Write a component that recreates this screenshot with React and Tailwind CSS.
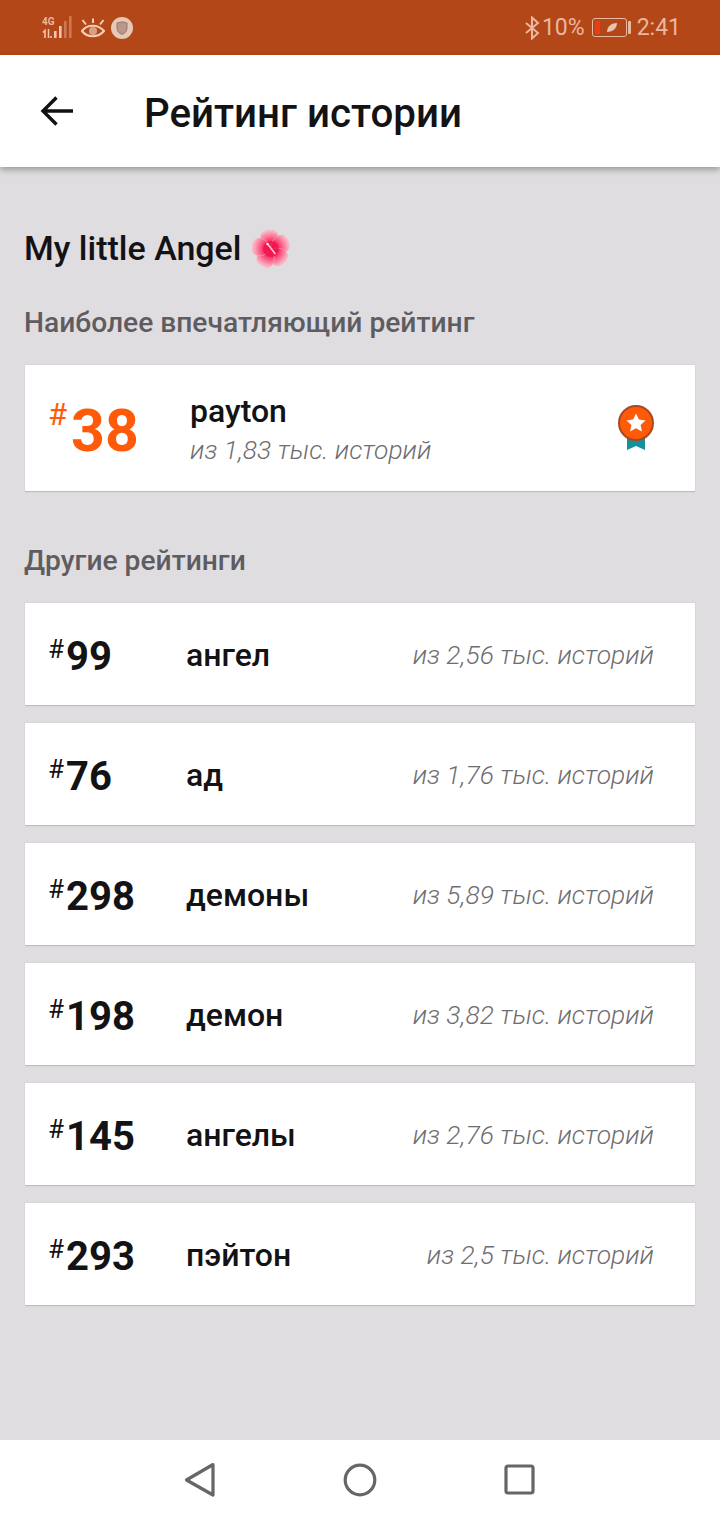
import React from "react";

const rows = [
  ["99", "ангел", "из 2,56 тыс. историй"],
  ["76", "ад", "из 1,76 тыс. историй"],
  ["298", "демоны", "из 5,89 тыс. историй"],
  ["198", "демон", "из 3,82 тыс. историй"],
  ["145", "ангелы", "из 2,76 тыс. историй"],
  ["293", "пэйтон", "из 2,5 тыс. историй"],
];

function Flower() {
  const petals = [-8, 64, 136, 208, 280];
  return (
    <svg width="40" height="40" viewBox="0 0 40 40" className="ml-[10px] shrink-0">
      <defs>
        <radialGradient id="petal" gradientUnits="userSpaceOnUse" cx="20" cy="20" r="19">
          <stop offset="0%" stopColor="#f00a48" />
          <stop offset="45%" stopColor="#fa3c70" />
          <stop offset="80%" stopColor="#fc92ab" />
          <stop offset="100%" stopColor="#fbc4cf" />
        </radialGradient>
      </defs>
      {petals.map((a) => (
        <path
          key={a}
          d="M20 20 C12 16 9 8 13 3.5 C16 0.5 24 0.5 27 3.5 C31 8 28 16 20 20 Z"
          fill="url(#petal)"
          stroke="#f8a9ba"
          strokeWidth="0.6"
          transform={`rotate(${a} 20 20)`}
        />
      ))}
      <circle cx="20" cy="20" r="8" fill="#f20f4c" opacity="0.75" />
      <path d="M17 15.5 L24 24.5" stroke="#fbcfc9" strokeWidth="1.6" strokeLinecap="round" />
      <circle cx="16.5" cy="15" r="1.3" fill="#fde6cf" />
    </svg>
  );
}

function Medal() {
  return (
    <svg width="40" height="48" viewBox="0 0 40 48">
      <path d="M11 28 H29 V46 L20 42 L11 46 Z" fill="#13929c" />
      <circle cx="20" cy="19" r="17" fill="#ff5a0a" stroke="#a9481f" strokeWidth="2" />
      <path d="M20 9.5 L22.9 15.6 L29.5 16.4 L24.6 20.9 L25.9 27.5 L20 24.2 L14.1 27.5 L15.4 20.9 L10.5 16.4 L17.1 15.6 Z" fill="#fff" />
    </svg>
  );
}

function StatusBar() {
  return (
    <div className="h-[55px] shrink-0 bg-[#b34717] flex items-center justify-between pl-[42px] pr-[39px] text-[#eab79f]">
      <div className="flex items-center">
        <svg width="33" height="26" viewBox="0 0 33 26">
          <text x="0" y="9.5" fontSize="10" fontWeight="700" fill="#eab79f" fontFamily="Roboto">4G</text>
          <path d="M1 17.5 L3 15.5 V23 M6.5 14 V23 M9 21 v2" stroke="#f0c4ae" strokeWidth="1.6" fill="none" />
          <rect x="12" y="16" width="2.6" height="7" fill="#f0c4ae" />
          <rect x="17" y="11" width="2.6" height="12" fill="#f0c4ae" />
          <rect x="22" y="6" width="2.6" height="17" fill="#f0c4ae" opacity="0.4" />
          <rect x="27" y="1" width="2.6" height="22" fill="#f0c4ae" opacity="0.4" />
        </svg>
        <svg width="24" height="24" viewBox="0 0 24 24" className="ml-[6px]" fill="none" stroke="#f3cdb8">
          <path d="M1 15 C6 8 17 8 23 15 C17 22 6 22 1 15 Z" strokeWidth="2.2" />
          <circle cx="12" cy="15" r="4" fill="#d9a184" stroke="none" />
          <path d="M1.5 4 L5 8.5 M12 2.5 V7 M22.5 4 L19 8.5" strokeWidth="2" />
        </svg>
        <div className="ml-[6px] w-[22px] h-[22px] rounded-full bg-[#e6c7b8] flex items-center justify-center">
          <svg width="12" height="14" viewBox="0 0 12 14">
            <path d="M1 2 L6 0.8 L11 2 V7.5 C11 10.5 8.5 12.5 6 13.4 C3.5 12.5 1 10.5 1 7.5 Z" fill="#b9978a" stroke="#8e6a5b" strokeWidth="0.8" />
          </svg>
        </div>
      </div>
      <div className="flex items-center font-['Roboto',sans-serif] text-[23px] leading-none">
        <svg width="16" height="24" viewBox="0 0 16 24" fill="none" stroke="#eab79f" strokeWidth="2" className="mr-[2px]">
          <path d="M2 7 L14 17 L8 22.5 V1.5 L14 7 L2 17" />
        </svg>
        <span>10%</span>
        <div className="ml-[7px] w-[35px] h-[19px] rounded-[3px] border border-[#eab79f] flex items-center pl-[2px]">
          <div className="w-[5px] h-[13px] bg-[#f23a13]" />
          <svg width="12" height="11" viewBox="0 0 12 11" className="ml-[6px]">
            <path d="M1 10 C1 4 6 1 11 1 C11 6 7 10 1 10 Z" fill="#e9c3b0" />
          </svg>
        </div>
        <div className="ml-[1px] w-[3px] h-[13px] rounded-[1px] bg-[#eab79f]" />
        <span className="ml-[6px]">2:41</span>
      </div>
    </div>
  );
}

export default function App() {
  return (
    <div className="w-[720px] h-[1520px] flex flex-col bg-[#dfdde0] font-['Roboto',sans-serif] overflow-hidden">
      <StatusBar />
      <header className="relative z-10 h-[112px] shrink-0 bg-white flex items-center pl-[40px] shadow-[0_3px_6px_rgba(0,0,0,0.3)]">
        <svg width="34" height="32" viewBox="0 0 34 32" fill="none" stroke="#111" strokeWidth="3.4">
          <path d="M33 16 H3 M16.5 2.5 L3 16 L16.5 29.5" />
        </svg>
        <h1 className="ml-[70px] mt-[6px] text-[40.3px] leading-none font-medium text-[#131214]">Рейтинг истории</h1>
      </header>
      <main className="flex-1 pl-[25px] pr-[25px] pt-[62px]">
        <div className="flex items-center h-[40px] -ml-px">
          <span className="text-[34px] leading-none font-medium text-[#131214] -mt-[2px]">My little Angel</span>
          <Flower />
        </div>
        <h2 className="mt-[38px] -ml-px text-[28.2px] leading-[32px] font-medium text-[#5e5c60]">Наиболее впечатляющий рейтинг</h2>
        <section className="mt-[26px] h-[127px] bg-white border-b border-[#bdbbbe] shadow-[0_0_1px_rgba(0,0,0,0.2)] flex items-center pl-[23px] pr-[39px]">
          <div className="w-[142px] flex items-start text-[#ff5a0a]">
            <span className="text-[31px] leading-none mt-[2px]">#</span>
            <span className="text-[59px] leading-none font-bold ml-[4px] mt-[4px]">38</span>
          </div>
          <div className="flex-1 pt-[2px]">
            <div className="text-[32px] leading-[36px] font-medium text-[#131214]">payton</div>
            <div className="text-[26.4px] leading-[32px] italic font-light text-[#6f6d71] mt-[5px]">из 1,83 тыс. историй</div>
          </div>
          <Medal />
        </section>
        <h2 className="mt-[53px] -ml-px text-[28.2px] leading-[32px] font-medium text-[#5e5c60]">Другие рейтинги</h2>
        <div className="mt-[26px] flex flex-col gap-[17px]">
          {rows.map(([n, name, sub]) => (
            <div key={n} className="h-[103px] bg-white border-b border-[#bdbbbe] shadow-[0_0_1px_rgba(0,0,0,0.2)] flex items-center pl-[24px] pr-[41px]">
              <div className="w-[137px] flex items-start text-[#131214]">
                <span className="text-[26px] leading-none mt-[5px] -ml-px">#</span>
                <span className="text-[40px] leading-none font-bold ml-[2px] mt-[6px]">{n}</span>
              </div>
              <div className="flex-1 text-[32px] leading-none font-medium text-[#131214] mt-[2px]">{name}</div>
              <div className="text-[26.4px] leading-none italic font-light text-[#6f6d71] mt-[2px]">{sub}</div>
            </div>
          ))}
        </div>
      </main>
      <nav className="h-[80px] shrink-0 bg-white flex items-center">
        <div className="w-full flex items-center justify-center gap-[124px]">
          <svg width="36" height="36" viewBox="0 0 36 36" fill="none" stroke="#666" strokeWidth="3.2" strokeLinejoin="round">
            <path d="M30 3.5 L3.5 19 L30 34 Z" transform="translate(1 -1)" />
          </svg>
          <svg width="36" height="36" viewBox="0 0 36 36" fill="none" stroke="#666" strokeWidth="3.2">
            <circle cx="18" cy="18" r="14.8" />
          </svg>
          <svg width="36" height="36" viewBox="0 0 36 36" fill="none" stroke="#666" strokeWidth="3.2" strokeLinejoin="round">
            <rect x="4" y="4" width="27" height="27" rx="2" />
          </svg>
        </div>
      </nav>
    </div>
  );
}
